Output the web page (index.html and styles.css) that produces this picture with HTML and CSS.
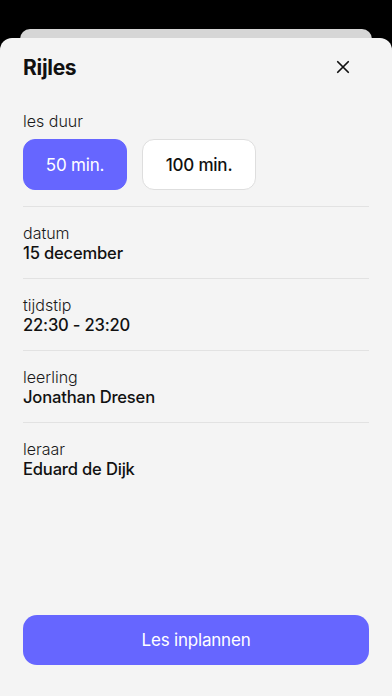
FILE: index.html
```html
<!DOCTYPE html>
<html lang="nl">
<head>
<meta charset="utf-8">
<link rel="stylesheet" href="styles.css">
</head>
<body>
<div class="screen">
  <div class="back-card"></div>
  <div class="sheet">
    <header class="sheet-head">
      <h1 class="title">Rijles</h1>
      <svg class="close" width="16" height="16" viewBox="0 0 16 16"><path d="M2 2L14 14M14 2L2 14" stroke="#111" stroke-width="2" stroke-linecap="round"/></svg>
    </header>
    <section class="duration">
      <div class="label">les duur</div>
      <div class="options">
        <button class="opt opt-active">50 min.</button>
        <button class="opt">100 min.</button>
      </div>
    </section>
    <div class="row"><div class="label">datum</div><div class="value">15 december</div></div>
    <div class="row"><div class="label">tijdstip</div><div class="value">22:30 - 23:20</div></div>
    <div class="row"><div class="label">leerling</div><div class="value">Jonathan Dresen</div></div>
    <div class="row row-last"><div class="label">leraar</div><div class="value">Eduard de Dijk</div></div>
    <div class="spacer"></div>
    <button class="submit">Les inplannen</button>
  </div>
</div>
</body>
</html>
```
FILE: styles.css
```css
* { box-sizing: border-box; }
html, body { margin: 0; padding: 0; }
body {
  background: #000;
  font-family: Inter, "Noto Sans", sans-serif;
  color: #111;
}
.screen {
  width: 392px;
  height: 696px;
  display: flex;
  flex-direction: column;
  padding-top: 29px;
  overflow: hidden;
}
.back-card {
  height: 20px;
  margin: 0 20px -11px;
  background: #d6d6d6;
  border-radius: 10px 10px 0 0;
}
.sheet {
  flex: 1;
  background: #f4f4f4;
  border-radius: 12px 12px 0 0;
  display: flex;
  flex-direction: column;
  padding: 0 23px 31px;
}
.sheet-head {
  height: 58px;
  display: flex;
  align-items: center;
  justify-content: space-between;
}
.title {
  margin: 0;
  font-size: 21px;
  font-weight: 700;
  letter-spacing: -0.3px;
}
.close { margin-right: 19px; width: 14px; height: 14px; }
.duration {
  padding-top: 15px;
  padding-bottom: 16px;
  border-bottom: 1px solid #e2e2e2;
}
.label {
  font-size: 16px;
  font-weight: 300;
  line-height: 20px;
  color: #1a1a1a;
}
.options {
  display: flex;
  gap: 15px;
  margin-top: 8px;
}
.opt {
  font-family: inherit;
  font-size: 17px;
  font-weight: 500;
  height: 51px;
  border-radius: 12px;
  border: 1px solid #dedede;
  background: #fff;
  color: #111;
  padding: 0;
  width: 114px;
  letter-spacing: -0.2px;
}
.opt-active {
  width: 104px;
  background: #6666ff;
  border-color: #6666ff;
  color: #fff;
  font-weight: 400;
}
.row {
  padding: 16px 0 15px;
  border-bottom: 1px solid #e2e2e2;
}
.row-last { border-bottom: none; }
.value {
  font-size: 16.6px;
  font-weight: 500;
  line-height: 20px;
  color: #111;
  letter-spacing: -0.2px;
}
.spacer { flex: 1; }
.submit {
  font-family: inherit;
  height: 50px;
  border: none;
  border-radius: 14px;
  background: #6666ff;
  color: #fff;
  font-size: 17px;
  font-weight: 400;
  letter-spacing: -0.2px;
}
```
